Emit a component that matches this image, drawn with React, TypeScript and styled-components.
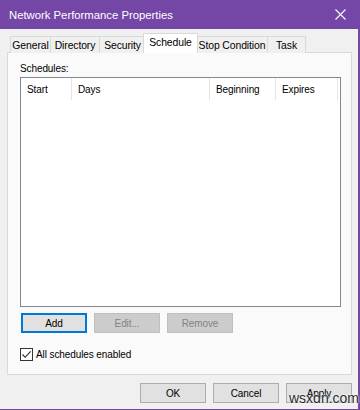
import React, { useState } from 'react'
import styled, { createGlobalStyle } from 'styled-components'

const GlobalStyle = createGlobalStyle`
  html, body {
    margin: 0;
    padding: 0;
    background: #f0f0f0;
  }
  body {
    font-family: 'Liberation Sans', Arial, sans-serif;
    font-size: 10px;
    letter-spacing: -0.1px;
    color: #000;
  }
`

const purple = '#7447a7'

const Window = styled.div`
  position: relative;
  width: 360px;
  height: 410px;
  box-sizing: border-box;
  display: flex;
  flex-direction: column;
  background: #f0f0f0;
  border-right: 2px solid ${purple};
  border-bottom: 1px solid ${purple};
`

const TitleBar = styled.div`
  height: 29px;
  flex: none;
  display: flex;
  align-items: center;
  justify-content: space-between;
  padding: 0 9px 0 9px;
  background: ${purple};
  color: #fff;
  font-size: 11.3px;
  letter-spacing: 0;
`

const CloseGlyph = styled.svg`
  width: 11px;
  height: 11px;
  margin-right: 3px;
`

const Body = styled.div`
  flex: 1;
  display: flex;
  flex-direction: column;
  padding: 5px 6px 0 7px;
`

const TabStrip = styled.div`
  display: flex;
  align-items: flex-end;
  height: 19px;
  padding-left: 3px;
  position: relative;
  z-index: 1;
`

const Tab = styled.div<{ active?: boolean; w: number }>`
  box-sizing: border-box;
  width: ${({ w, active }) => (active ? w + 4 : w + 1)}px;
  height: ${({ active }) => (active ? '20px' : '17px')};
  padding-top: ${({ active }) => (active ? '2px' : '1px')};
  margin: ${({ active }) => (active ? '0 -2px 0 -2px' : '0 -1px 0 0')};
  border: 1px solid #d9d9d9;
  border-bottom: none;
  background: ${({ active }) => (active ? '#ffffff' : '#f0f0f0')};
  position: relative;
  z-index: ${({ active }) => (active ? 2 : 0)};
  display: flex;
  justify-content: center;
  align-items: ${({ active }) => (active ? 'flex-start' : 'center')};
  line-height: 13px;
  font-size: 10.4px;
  white-space: nowrap;
`

const Panel = styled.div`
  box-sizing: border-box;
  height: 323px;
  margin-top: -1px;
  border: 1px solid #d9d9d9;
  background: #fafafa;
  display: flex;
  flex-direction: column;
  padding: 9px 11px 0 12px;
`

const Label = styled.div`
  height: 14px;
  line-height: 14px;
`

const ListBox = styled.div`
  box-sizing: border-box;
  margin-top: 1px;
  width: 321px;
  height: 230px;
  border: 1px solid #828790;
  background: #fff;
`

const HeaderRow = styled.div`
  display: grid;
  grid-template-columns: 51px 138px 66px 62px;
  height: 22px;
`

const HeaderCell = styled.div`
  border-right: 1px solid #e5e5e5;
  padding-left: 6px;
  display: flex;
  align-items: center;
`

const ButtonRow = styled.div<{ end?: boolean }>`
  display: flex;
  gap: 7px;
  justify-content: ${({ end }) => (end ? 'flex-end' : 'flex-start')};
`

const Button = styled.button<{ focused?: boolean }>`
  box-sizing: border-box;
  width: 66px;
  height: 20px;
  padding: 0;
  font-family: inherit;
  font-size: 10px;
  letter-spacing: -0.1px;
  color: ${({ disabled }) => (disabled ? '#838383' : '#000')};
  background: ${({ disabled }) => (disabled ? '#cccccc' : '#e1e1e1')};
  border: 1px solid ${({ disabled, focused }) => (focused ? '#0078d7' : disabled ? '#bfbfbf' : '#adadad')};
  box-shadow: ${({ focused }) => (focused ? 'inset 0 0 0 1px #0078d7' : 'none')};
`

const EditRow = styled(ButtonRow)`
  margin-top: 6px;
  padding-left: 1px;
`

const CheckRow = styled.label`
  display: flex;
  align-items: center;
  gap: 3px;
  margin-top: 14px;
  height: 14px;
`

const Box = styled.span`
  box-sizing: border-box;
  width: 13px;
  height: 13px;
  border: 1px solid #333;
  background: #fff;
  display: flex;
  align-items: center;
  justify-content: center;
`

const Footer = styled(ButtonRow)`
  margin-top: 8px;
`

const Watermark = styled.div`
  position: absolute;
  left: 289px;
  top: 390px;
  font-family: 'Liberation Sans', sans-serif;
  font-size: 14px;
  letter-spacing: 0;
  color: #2a2a2a;
  text-shadow: 0 0 2px #fff, 0 0 2px #fff;
`

const tabs = [
  { label: 'General', w: 40 },
  { label: 'Directory', w: 49 },
  { label: 'Security', w: 46 },
  { label: 'Schedule', w: 51 },
  { label: 'Stop Condition', w: 71 },
  { label: 'Task', w: 38 },
]

export default function App() {
  const [checked, setChecked] = useState(true)
  return (
    <>
      <GlobalStyle />
      <Window>
        <TitleBar>
          <span>Network Performance Properties</span>
          <CloseGlyph viewBox="0 0 11 11">
            <path d="M0.5 0.5 L10.5 10.5 M10.5 0.5 L0.5 10.5" stroke="#fff" strokeWidth="1.1" />
          </CloseGlyph>
        </TitleBar>
        <Body>
          <TabStrip>
            {tabs.map((t) => (
              <Tab key={t.label} w={t.w} active={t.label === 'Schedule'}>
                {t.label}
              </Tab>
            ))}
          </TabStrip>
          <Panel>
            <Label>Schedules:</Label>
            <ListBox>
              <HeaderRow>
                <HeaderCell>Start</HeaderCell>
                <HeaderCell>Days</HeaderCell>
                <HeaderCell>Beginning</HeaderCell>
                <HeaderCell>Expires</HeaderCell>
              </HeaderRow>
            </ListBox>
            <EditRow>
              <Button focused>Add</Button>
              <Button disabled>Edit...</Button>
              <Button disabled>Remove</Button>
            </EditRow>
            <CheckRow onClick={() => setChecked(!checked)}>
              <Box>
                {checked && (
                  <svg width="11" height="11" viewBox="0 0 11 11">
                    <path d="M1.5 5.5 L4.2 8.3 L9.6 2.4" fill="none" stroke="#222" strokeWidth="1.1" />
                  </svg>
                )}
              </Box>
              <span>All schedules enabled</span>
            </CheckRow>
          </Panel>
          <Footer end>
            <Button>OK</Button>
            <Button>Cancel</Button>
            <Button>Apply</Button>
          </Footer>
        </Body>
        <Watermark>wsxdn.com</Watermark>
      </Window>
    </>
  )
}
